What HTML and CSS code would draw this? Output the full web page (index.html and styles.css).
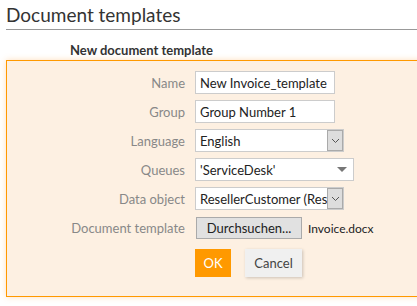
FILE: index.html
```html
<!DOCTYPE html>
<html lang="en">
<head>
  <meta charset="UTF-8">
  <title>Document templates</title>
  <link rel="stylesheet" href="styles.css">
</head>
<body>

  <!-- Page title -->
  <h1 class="page-title">Document templates</h1>

  <!-- New template form -->
  <h2 class="form-title">New document template</h2>
  <div class="panel">
    <form class="form-grid">
      <label class="field-label">Name</label>
      <input class="text-input" type="text" value="New Invoice_template">

      <label class="field-label">Group</label>
      <input class="text-input" type="text" value="Group Number 1">

      <label class="field-label">Language</label>
      <div class="select select-box">
        <span class="select-value">English</span>
        <span class="select-btn"><svg width="9" height="6" viewBox="0 0 9 6"><path d="M1 1 L4.5 4.5 L8 1" fill="none" stroke="#555" stroke-width="1"/></svg></span>
      </div>

      <label class="field-label">Queues</label>
      <div class="select select-wide">
        <span class="select-value">'ServiceDesk'</span>
        <span class="select-tri"></span>
      </div>

      <label class="field-label">Data object</label>
      <div class="select select-box">
        <span class="select-value">ResellerCustomer (Reseller)</span>
        <span class="select-btn"><svg width="9" height="6" viewBox="0 0 9 6"><path d="M1 1 L4.5 4.5 L8 1" fill="none" stroke="#555" stroke-width="1"/></svg></span>
      </div>

      <label class="field-label">Document template</label>
      <div class="file-row">
        <button type="button" class="browse-btn">Durchsuchen...</button>
        <span class="file-name">Invoice.docx</span>
      </div>

      <span></span>
      <div class="actions">
        <button type="button" class="btn-ok">OK</button>
        <button type="button" class="btn-cancel">Cancel</button>
      </div>
    </form>
  </div>

</body>
</html>
```

FILE: styles.css
```css
body {
  margin: 0;
  padding: 0 0 0 6px;
  font-family: Lato, "Open Sans", sans-serif;
  background-color: #fff;
  overflow: hidden;
  width: 411px;
  height: 306px;
}
.page-title {
  margin: 0;
  padding: 4px 0 3px 0;
  font-size: 19px;
  font-weight: normal;
  color: #333;
  border-bottom: 1px solid #999;
  line-height: 22px;
}
.form-title {
  margin: 12px 0 0 64px;
  font-size: 13px;
  font-weight: bold;
  color: #333;
  line-height: 16px;
  height: 18px;
}
.panel {
  width: 440px;
  margin-top: 0;
  border: 1px solid #f90;
  background-color: #fdf0e2;
  box-shadow: 0 0 6px rgba(255, 160, 60, 0.35);
  padding: 10px 0 19px 0;
}
.form-grid {
  display: grid;
  grid-template-columns: 178px auto;
  column-gap: 10px;
  row-gap: 6px;
  align-items: center;
  justify-items: start;
}
.field-label {
  justify-self: end;
  font-size: 13px;
  color: #888;
}
.text-input {
  box-sizing: border-box;
  width: 140px;
  height: 23px;
  margin: 0;
  padding: 0 4px;
  border: 1px solid #ccc;
  background: #fff;
  font-family: inherit;
  font-size: 13px;
  color: #222;
  outline: none;
}
.select {
  box-sizing: border-box;
  height: 23px;
  border: 1px solid #ccc;
  background: #fff;
  display: flex;
  align-items: center;
  overflow: hidden;
  font-size: 13px;
  color: #222;
}
.select-box {
  width: 149px;
}
.select-wide {
  width: 159px;
}
.select-value {
  flex: 1;
  padding-left: 4px;
  white-space: nowrap;
  overflow: hidden;
}
.select-btn {
  width: 16px;
  height: 21px;
  box-sizing: border-box;
  border: 1px solid #aaa;
  background: #ddd;
  display: flex;
  align-items: center;
  justify-content: center;
}
.select-tri {
  width: 0;
  height: 0;
  border-left: 5px solid transparent;
  border-right: 5px solid transparent;
  border-top: 5px solid #777;
  margin-right: 6px;
}
.file-row {
  display: flex;
  align-items: center;
  gap: 6px;
  margin-top: 1px;
}
.browse-btn {
  box-sizing: border-box;
  margin: 0 0 0 1px;
  width: 106px;
  height: 22px;
  border: 1px solid #aaa;
  background: #e1e1e1;
  font-family: inherit;
  font-size: 13px;
  color: #222;
  padding: 0;
}
.file-name {
  font-size: 12px;
  color: #222;
}
.actions {
  display: flex;
  gap: 14px;
  margin-top: 4px;
}
.btn-ok {
  width: 36px;
  height: 28px;
  border: none;
  background: #f90;
  color: #fff;
  font-family: inherit;
  font-size: 13px;
  padding: 0;
}
.btn-cancel {
  width: 57px;
  height: 28px;
  border: none;
  background: #f0f0f0;
  color: #444;
  font-family: inherit;
  font-size: 13px;
  padding: 0;
  box-shadow: 1px 1px 3px rgba(0, 0, 0, 0.2);
}
```
